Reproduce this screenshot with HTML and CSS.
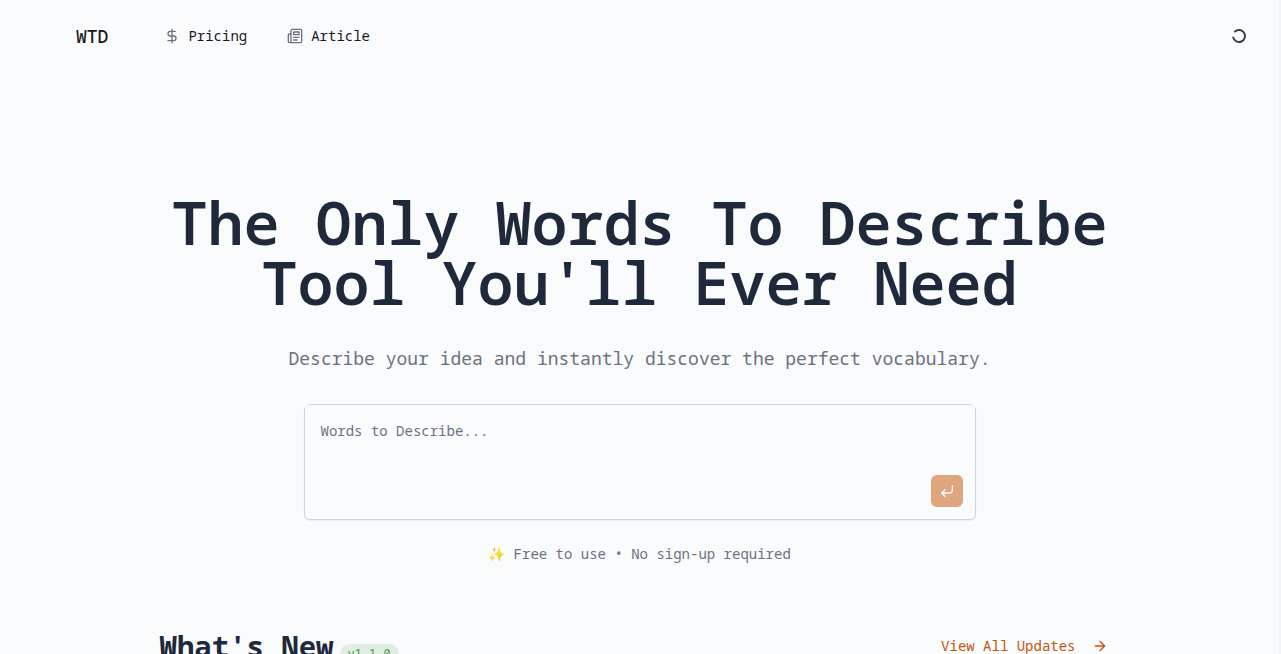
FILE: index.html
```html
<!DOCTYPE html>
<html lang="en">
<head>
<meta charset="utf-8">
<meta name="viewport" content="width=device-width, initial-scale=1">
<title>WTD</title>
<link rel="stylesheet" href="styles.css">
</head>
<body>
<div class="page">
  <header class="header">
    <a class="brand" href="#">WTD</a>
    <nav class="nav">
      <a class="nav-link" href="#">
        <svg class="icon" viewBox="0 0 24 24" aria-hidden="true"><path d="M12 2v20M17 5H9.500a3.500 3.500 0 0 0 0 7h5a3.500 3.500 0 0 1 0 7H6"/></svg>
        Pricing
      </a>
      <a class="nav-link" href="#">
        <svg class="icon" viewBox="0 0 24 24" aria-hidden="true"><path d="M4 22h16a2 2 0 0 0 2-2V4a2 2 0 0 0-2-2H8a2 2 0 0 0-2 2v16a2 2 0 0 1-2 2Zm0 0a2 2 0 0 1-2-2v-9c0-1.100.9-2 2-2h2M18 14h-8M15 18h-5M10 6h8v4h-8V6Z"/></svg>
        Article
      </a>
    </nav>
    <svg class="icon spinner" viewBox="0 0 24 24" role="img" aria-label="Loading"><path d="M6 5.300A9 9 0 1 1 3.300 14.200"/></svg>
  </header>
  <main>
    <section class="hero">
      <h1 class="title">The Only Words To Describe Tool You'll Ever Need</h1>
      <p class="subtitle">Describe your idea and instantly discover the perfect vocabulary.</p>
      <form class="prompt">
        <textarea class="prompt-input" aria-label="Words to describe" placeholder="Words to Describe..."></textarea>
        <div class="prompt-bar">
          <button class="submit" type="button" aria-label="Submit">
            <svg class="icon" viewBox="0 0 24 24" aria-hidden="true"><path d="M20 4v7a4 4 0 0 1-4 4H4M9 10l-5 5 5 5"/></svg>
          </button>
        </div>
      </form>
      <p class="note">✨ Free to use • No sign-up required</p>
    </section>
    <section class="updates">
      <div class="updates-heading">
        <h2 class="updates-title">What's New</h2>
        <span class="badge">v1.1.0</span>
      </div>
      <a class="view-all" href="#">
        View All Updates
        <svg class="icon" viewBox="0 0 24 24" aria-hidden="true"><path d="M5 12h14M12 5l7 7-7 7"/></svg>
      </a>
    </section>
  </main>
</div>
</body>
</html>
```
FILE: styles.css
```css
*, *::before, *::after { box-sizing: border-box; }

html { height: 100%; }

body {
  height: 100%;
  margin: 0;
  overflow: hidden;
  background: #fafbfd;
  color: #18181b;
  font-family: "Noto Sans Mono", "DejaVu Sans Mono", monospace;
  font-size: 14px;
  line-height: 20px;
}

h1, h2, p { margin: 0; }
a { color: inherit; text-decoration: none; }

.page {
  min-height: 100%;
  border-right: 2px solid #f3f4f6;
}

.icon {
  flex: none;
  width: 16px;
  height: 16px;
  fill: none;
  stroke: currentColor;
  stroke-width: 2;
  stroke-linecap: round;
  stroke-linejoin: round;
}

.header {
  display: flex;
  align-items: center;
  height: 72px;
  padding: 0 32px 0 76px;
}

.brand {
  margin-right: 56px;
  font-size: 18px;
  font-weight: 500;
  line-height: 28px;
}

.nav { display: flex; gap: 40px; }

.nav-link {
  display: flex;
  align-items: center;
  gap: 8px;
}

.nav-link .icon { color: #6b7280; }

.spinner {
  margin-left: auto;
  color: #3f3f46;
  stroke-width: 3;
}

.hero {
  display: flex;
  flex-direction: column;
  align-items: center;
  padding: 120px 32px 64px;
  text-align: center;
}

.title {
  max-width: 960px;
  color: #1e293b;
  font-size: 60px;
  font-weight: 600;
  line-height: 60px;
}

.subtitle {
  margin-top: 32px;
  color: #6b7280;
  font-size: 18px;
  line-height: 28px;
}

.prompt {
  width: 100%;
  max-width: 672px;
  margin-top: 32px;
  border: 1px solid #d1d5db;
  border-radius: 6px;
  box-shadow: 0 1px 2px rgba(0, 0, 0, 0.06);
}

.prompt-input {
  display: block;
  width: 100%;
  height: 70px;
  padding: 16px;
  border: 0;
  outline: 0;
  resize: none;
  background: #fafbfd;
  color: #18181b;
  font: inherit;
}

.prompt-input::placeholder { color: #6b7280; opacity: 1; }

.prompt-bar {
  display: flex;
  justify-content: flex-end;
  padding: 0 12px 12px;
}

.submit {
  display: grid;
  place-items: center;
  width: 32px;
  height: 32px;
  padding: 0;
  border: 0;
  border-radius: 6px;
  background: #dfa57d;
  color: #fff;
}

.note {
  margin-top: 24px;
  color: #6b7280;
}

.updates {
  display: flex;
  align-items: center;
  justify-content: space-between;
  max-width: 960px;
  margin: 0 auto;
}

.updates-heading {
  display: flex;
  align-items: flex-end;
  gap: 6px;
}

.updates-title {
  color: #1e293b;
  font-size: 29px;
  font-weight: 700;
  line-height: 36px;
}

.badge {
  padding: 2px 8px;
  border-radius: 10px;
  background: #dfeee0;
  color: #4d9a4d;
  font-size: 12px;
  line-height: 16px;
}

.view-all {
  display: flex;
  align-items: center;
  gap: 16px;
  padding: 0 12px;
  color: #c2560c;
}
```
